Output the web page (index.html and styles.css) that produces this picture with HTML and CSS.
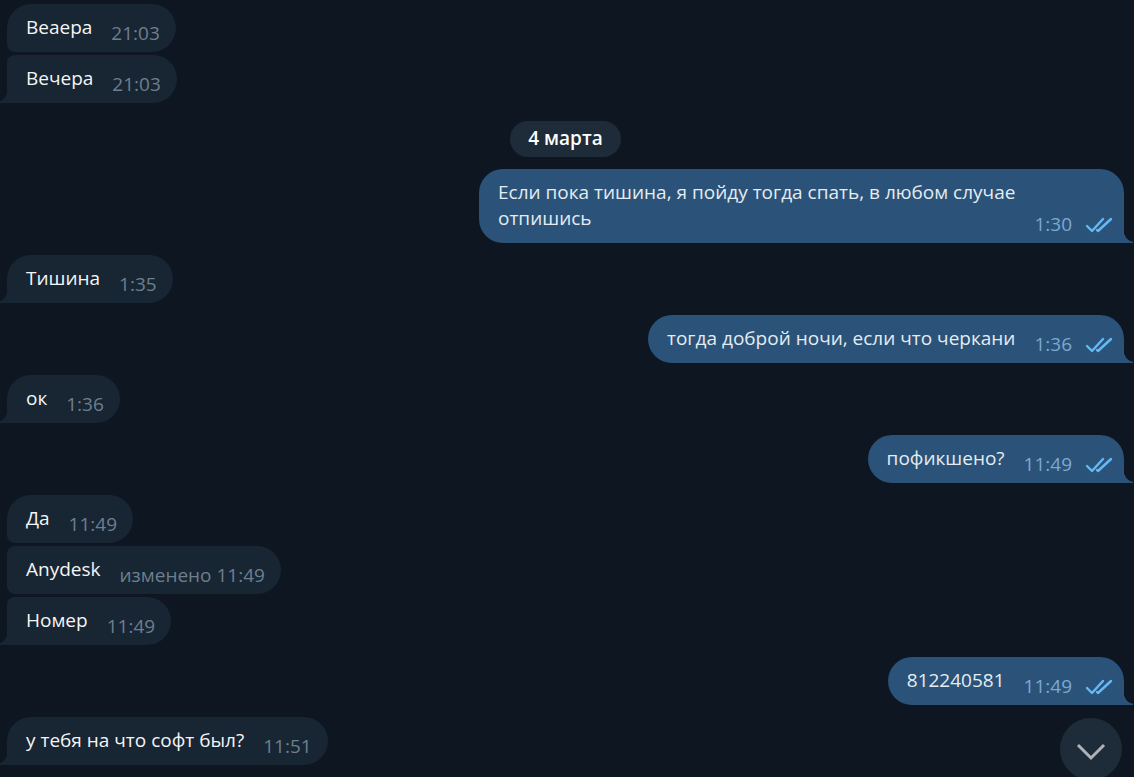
FILE: index.html
```html
<!DOCTYPE html>
<html lang="ru">
<head>
  <meta charset="UTF-8">
  <meta name="viewport" content="width=device-width, initial-scale=1">
  <title>Чат</title>
  <link rel="stylesheet" href="styles.css">
</head>
<body>

  <!-- галочки "прочитано" -->
  <svg class="sprite" aria-hidden="true">
    <symbol id="read" viewBox="0 0 28 16">
      <path d="M2 9l5 5L18 2M12 13l1 1L26 2"/>
    </symbol>
  </svg>

  <main class="chat">
    <div class="group in">
      <div class="message">Веаера<span class="meta"><time>21:03</time></span></div>
      <div class="message">Вечера<span class="meta"><time>21:03</time></span></div>
    </div>

    <div class="date">4 марта</div>

    <div class="group out">
      <div class="message">Если пока тишина, я пойду тогда спать, в любом случае отпишись<span class="meta"><time>1:30</time><svg class="read"><use href="#read"/></svg></span></div>
    </div>

    <div class="group in">
      <div class="message">Тишина<span class="meta"><time>1:35</time></span></div>
    </div>

    <div class="group out">
      <div class="message">тогда доброй ночи, если что черкани<span class="meta"><time>1:36</time><svg class="read"><use href="#read"/></svg></span></div>
    </div>

    <div class="group in">
      <div class="message">ок<span class="meta"><time>1:36</time></span></div>
    </div>

    <div class="group out">
      <div class="message">пофикшено?<span class="meta"><time>11:49</time><svg class="read"><use href="#read"/></svg></span></div>
    </div>

    <div class="group in">
      <div class="message">Да<span class="meta"><time>11:49</time></span></div>
      <div class="message">Anydesk<span class="meta">изменено <time>11:49</time></span></div>
      <div class="message">Номер<span class="meta"><time>11:49</time></span></div>
    </div>

    <div class="group out">
      <div class="message">812240581<span class="meta"><time>11:49</time><svg class="read"><use href="#read"/></svg></span></div>
    </div>

    <div class="group in">
      <div class="message">у тебя на что софт был?<span class="meta"><time>11:51</time></span></div>
    </div>
  </main>

  <button type="button" class="scroll-down" aria-label="Вниз">
    <svg width="30" height="18" viewBox="0 0 30 18"><path d="M2 2l13 13L28 2"/></svg>
  </button>

</body>
</html>
```

FILE: styles.css
```css
* {
  box-sizing: border-box;
}

body {
  margin: 0;
  overflow-x: hidden;
  background-color: #0e1621;
  color: #f5f5f5;
  font-family: "Open Sans", "Noto Sans", sans-serif;
  font-size: 19px;
  line-height: 26px;
}

.sprite {
  position: absolute;
  width: 0;
  height: 0;
}

.chat {
  display: flex;
  flex-direction: column;
  gap: 12px;
  padding: 4px 10px 12px 7px;
}

.group {
  display: flex;
  flex-direction: column;
  align-items: flex-start;
  gap: 3px;
}

.group.out {
  align-items: flex-end;
}

.message {
  position: relative;
  display: flow-root;
  max-width: 645px;
  padding: 10px 16px 6px 19px;
  border-radius: 24px;
}

.in .message {
  background-color: #182533;
  border-top-left-radius: 8px;
  border-bottom-left-radius: 8px;
}

.in .message:first-child {
  border-top-left-radius: 24px;
}

.in .message:last-child {
  border-bottom-left-radius: 0;
}

.out .message {
  padding-right: 11px;
  background-color: #2b5278;
  color: #e4ecf2;
  border-bottom-right-radius: 0;
}

/* хвостик последнего сообщения в группе */
.message:last-child::after {
  content: "";
  position: absolute;
  bottom: 0;
  width: 9px;
  height: 15px;
}

.in .message:last-child::after {
  right: 100%;
  background: radial-gradient(10px 14px at 0 0, transparent 94%, #182533);
}

.out .message:last-child::after {
  left: 100%;
  background: radial-gradient(10px 14px at 100% 0, transparent 94%, #2b5278);
}

.meta {
  float: right;
  display: flex;
  align-items: center;
  margin: 6px 0 0 19px;
  color: #6d7f8f;
  white-space: pre;
}

.out .meta {
  color: #7da8d3;
}

.read {
  width: 28px;
  height: 16px;
  margin: 1px 0 0 13px;
  fill: none;
  stroke: #65b9f4;
  stroke-width: 2.4;
  stroke-linecap: round;
  stroke-linejoin: round;
}

.date {
  align-self: center;
  margin-top: 6px;
  padding: 4px 18px 6px;
  border-radius: 18px;
  background-color: #1e2c3a;
  color: #fff;
  font-weight: 600;
}

.scroll-down {
  position: fixed;
  right: 12px;
  bottom: -3px;
  display: flex;
  align-items: center;
  justify-content: center;
  width: 62px;
  height: 62px;
  padding: 6px 0 0;
  border: 0;
  border-radius: 50%;
  background-color: #1e2c3a;
  cursor: pointer;
}

.scroll-down path {
  fill: none;
  stroke: #adb3b9;
  stroke-width: 3;
}
```
